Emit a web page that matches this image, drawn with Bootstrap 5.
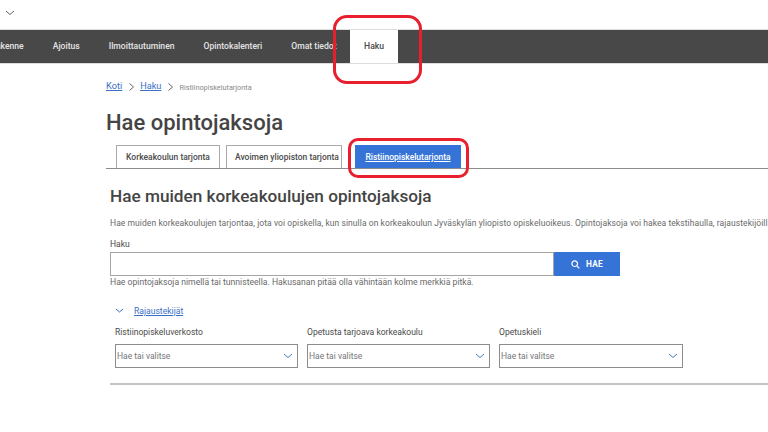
<!doctype html>
<html lang="fi"><head><meta charset="utf-8">
<link href="https://cdn.jsdelivr.net/npm/bootstrap@5.3.0/dist/css/bootstrap.min.css" rel="stylesheet">
<style>
html,body{height:432px;overflow:hidden}
body{position:relative;background:#fff;font-family:Roboto,"Noto Sans",sans-serif;color:#4a4a4a;font-size:9px;width:768px}
.topstrip{height:29px;padding:10px 0 0 5px}
.topstrip svg{display:block}
.mainbar{height:35px;background:#484848;border-top:1px solid #ddd;border-bottom:1px solid #ddd;margin-left:-24px;white-space:nowrap;width:800px}
.mainbar a{padding:0 14.5px;color:#e4e4e4;font-weight:500;font-size:8.6px;text-decoration:none;height:100%}
.mainbar a.now{background:#fff;color:#4a4a4a;margin-left:-1px;padding:0 14px}
.wrap{padding-left:106px}
.crumbs{height:46px;padding-top:15px;font-size:9.2px;gap:5.5px;color:#888}
.crumbs a{color:#3a6fc4}
.crumbs .last{font-size:7.3px;color:#8a8a8a}
.pagehead{font-size:22px;font-weight:500;color:#444;margin:0;line-height:26px}
.tabrow{margin-top:5px;height:28px;border-bottom:1px solid #8c8c8c;padding-left:10px;gap:6px}
.tabrow a{height:23px;font-size:8.5px;font-weight:500;color:#4a4a4a;text-decoration:none;border:1px solid #aaa;border-bottom:0;padding:0;justify-content:center}
.tabrow .t1{width:104px}.tabrow .t2{width:116px;justify-content:flex-start;padding-left:8px}
.tabrow a.on{background:#3574d6;border-color:#3574d6;color:#fff;text-decoration:underline;margin-left:7px;width:106px}
.inner{padding-left:4px}
.subhead{font-size:17.2px;font-weight:500;color:#444;margin:17px 0 0;line-height:20px}
.lede{margin:11px 0 0;font-size:8.5px;line-height:12px;color:#6a6a6a;white-space:nowrap;letter-spacing:.07px}
.fieldname{font-size:8.55px;line-height:12px;color:#4a4a4a;margin:0}
.gapped{margin-top:9px}
.searchbox{height:24px;width:510px;margin-top:2px}
.searchbox input{flex:1;border:1px solid #a5a5a5;border-radius:0;height:24px;box-shadow:none}
.searchbox button{width:66px;height:24px;background:#3574d6;color:#fff;border:0;border-radius:0;font-size:8.3px;font-weight:700;letter-spacing:.3px;gap:6px;padding:0}
.helper{font-size:8.65px;color:#6a6a6a;line-height:12px;margin:0}
.togglerow{margin-top:17px;gap:10px;padding-left:5px;height:12px}
.togglerow a{font-size:8.6px;color:#3a6fc4}
.filters{margin-top:9px;padding-left:5px;gap:9px}
.pick{width:183px}
.pick:last-child{width:184px}
.pickbox{height:24px;border:1px solid #8c8c8c;margin-top:6px;padding:0 4px 0 1px;color:#777;font-size:8.5px}
.rule{height:2px;background:#c4c4c4;margin-top:15px;border:0;opacity:1}
.callout{position:absolute;border:3px solid #e8202e;pointer-events:none}
.callout-a{left:333px;top:15px;width:89px;height:69px;border-radius:14px}
.callout-b{left:348px;top:138px;width:121px;height:40px;border-radius:10px}
</style></head><body>
<div class="topstrip"><svg width="10" height="6" viewBox="0 0 10 6"><path d="M1 1l4 3.5L9 1" fill="none" stroke="#666" stroke-width="1"/></svg></div>
<nav class="mainbar d-flex align-items-stretch">
<a class="d-flex align-items-center" href="#">Rakenne</a>
<a class="d-flex align-items-center" href="#">Ajoitus</a>
<a class="d-flex align-items-center" href="#">Ilmoittautuminen</a>
<a class="d-flex align-items-center" href="#">Opintokalenteri</a>
<a class="d-flex align-items-center" href="#">Omat tiedot</a>
<a class="d-flex align-items-center now" href="#">Haku</a>
</nav>
<div class="wrap">
<div class="crumbs d-flex align-items-start">
<a href="#">Koti</a><svg class="mt-1" width="7" height="8" viewBox="0 0 6 8"><path d="M1 .5L5 4 1 7.5" fill="none" stroke="#666"/></svg>
<a href="#">Haku</a><svg class="mt-1" width="7" height="8" viewBox="0 0 6 8"><path d="M1 .5L5 4 1 7.5" fill="none" stroke="#666"/></svg>
<span class="last mt-1">Ristiinopiskelutarjonta</span>
</div>
<h1 class="pagehead">Hae opintojaksoja</h1>
<div class="tabrow d-flex align-items-end">
<a class="d-flex align-items-center t1" href="#">Korkeakoulun tarjonta</a>
<a class="d-flex align-items-center t2" href="#">Avoimen yliopiston tarjonta</a>
<a class="d-flex align-items-center on" href="#">Ristiinopiskelutarjonta</a>
</div>
<div class="inner">
<h2 class="subhead">Hae muiden korkeakoulujen opintojaksoja</h2>
<p class="lede">Hae muiden korkeakoulujen tarjontaa, jota voi opiskella, kun sinulla on korkeakoulun Jyväskylän yliopisto opiskeluoikeus. Opintojaksoja voi hakea tekstihaulla, rajaustekijöillä</p>
<p class="fieldname gapped">Haku</p>
<div class="searchbox d-flex">
<input class="form-control" type="text" aria-label="Haku">
<button class="btn d-flex align-items-center justify-content-center" type="button"><svg width="9" height="9" viewBox="0 0 9 9"><circle cx="3.7" cy="3.7" r="2.8" fill="none" stroke="#fff" stroke-width="1.2"/><path d="M5.8 5.8L8.4 8.4" stroke="#fff" stroke-width="1.2"/></svg>HAE</button>
</div>
<p class="helper">Hae opintojaksoja nimellä tai tunnisteella. Hakusanan pitää olla vähintään kolme merkkiä pitkä.</p>
<div class="togglerow d-flex align-items-center"><svg width="9" height="6" viewBox="0 0 9 6"><path d="M1 1l3.5 3L8 1" fill="none" stroke="#3a6fc4"/></svg><a href="#">Rajaustekijät</a></div>
<div class="filters d-flex">
<div class="pick"><p class="fieldname">Ristiinopiskeluverkosto</p><div class="pickbox d-flex justify-content-between align-items-center"><span>Hae tai valitse</span><svg width="10" height="6" viewBox="0 0 10 6"><path d="M1 1l4 3.5L9 1" fill="none" stroke="#4a78c0"/></svg></div></div>
<div class="pick"><p class="fieldname">Opetusta tarjoava korkeakoulu</p><div class="pickbox d-flex justify-content-between align-items-center"><span>Hae tai valitse</span><svg width="10" height="6" viewBox="0 0 10 6"><path d="M1 1l4 3.5L9 1" fill="none" stroke="#4a78c0"/></svg></div></div>
<div class="pick"><p class="fieldname">Opetuskieli</p><div class="pickbox d-flex justify-content-between align-items-center"><span>Hae tai valitse</span><svg width="10" height="6" viewBox="0 0 10 6"><path d="M1 1l4 3.5L9 1" fill="none" stroke="#4a78c0"/></svg></div></div>
</div>
<hr class="rule">
</div>
</div>
<div class="callout callout-a"></div>
<div class="callout callout-b"></div>
<script src="https://cdn.jsdelivr.net/npm/bootstrap@5.3.0/dist/js/bootstrap.bundle.min.js"></script>
</body></html>
